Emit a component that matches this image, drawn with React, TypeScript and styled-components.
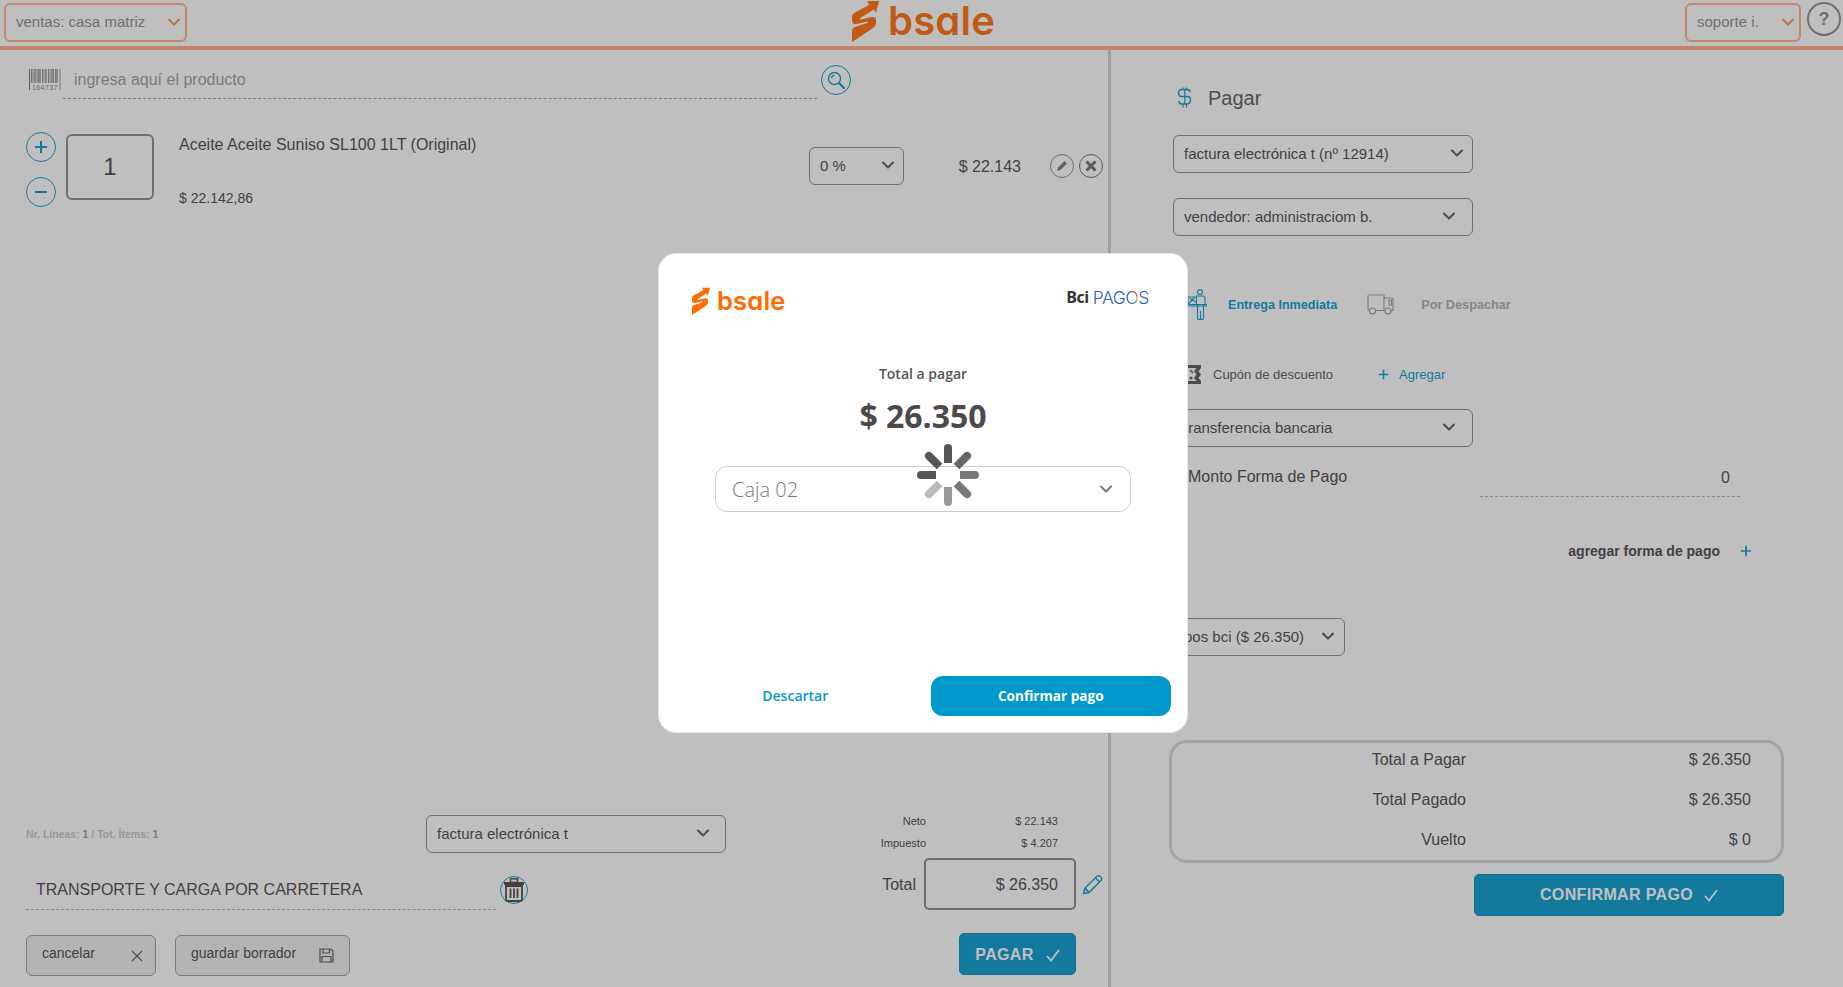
import React from "react";
import styled, { createGlobalStyle } from "styled-components";

const Global = createGlobalStyle`
  html, body { margin: 0; padding: 0; height: 100%; background: #fff; overflow: hidden; }
  body { font-family: "Liberation Sans", Arial, sans-serif; color: #444; }
  #root { height: 987px; }
  * { box-sizing: border-box; }
`;

const BLUE = "#0099cc";
const ORANGE = "#ff6b00";

const Page = styled.div`
  position: relative;
  width: 1843px;
  height: 987px;
  overflow: hidden;
  background: #fff;
`;
const Header = styled.header`
  height: 50px;
  border-bottom: 4px solid #ffae85;
  display: grid;
  grid-template-columns: 1fr auto 1fr;
  align-items: start;
  padding: 3px 2px 0 4px;
`;
const HeaderRight = styled.div`
  display: flex;
  justify-content: flex-end;
  gap: 6px;
`;
const HeaderSelect = styled.div<{ $w: number }>`
  width: ${(p) => p.$w}px;
  height: 39px;
  border: 2px solid #ffae85;
  border-radius: 6px;
  display: flex;
  align-items: center;
  justify-content: space-between;
  padding: 0 4px 2px 10px;
  font-size: 15px;
  color: #888;
`;
const HelpCircle = styled.div`
  width: 34px;
  height: 34px;
  margin-top: -1px;
  border: 2px solid #888;
  border-radius: 50%;
  display: flex;
  align-items: center;
  justify-content: center;
  font-size: 18px;
  font-weight: 700;
  color: #888;
`;
const LogoWrap = styled.div<{ $gap: number }>`
  display: flex;
  align-items: flex-start;
  gap: ${(p) => p.$gap}px;
`;
const LogoWord = styled.span<{ $size: number }>`
  font-family: Inter, "Liberation Sans", sans-serif;
  font-weight: 600;
  font-size: ${(p) => p.$size}px;
  font-feature-settings: "cv11" 1;
  line-height: 1;
  color: ${ORANGE};
  letter-spacing: 0.2px;
`;
const HeaderLogoRow = styled(LogoWrap)`
  margin: -3px 0 0 2px;
  ${LogoWord} { margin-top: 1px; }
`;
const ModalLogoRow = styled(LogoWrap)`
  ${LogoWord} { margin-top: 1px; }
`;
const Main = styled.main`
  display: flex;
  height: 937px;
`;
const LeftCol = styled.section`
  width: 1111px;
  border-right: 3px solid #d0d0d0;
  display: flex;
  flex-direction: column;
`;
const SearchRow = styled.div`
  display: flex;
  align-items: flex-start;
  padding: 20px 0 0 28px;
`;
const BarcodeSlot = styled.div`
  margin: -1px 0 0 1px;
  height: 21px;
`;
const SearchInput = styled.div`
  width: 754px;
  height: 29px;
  margin-left: 2px;
  border-bottom: 1px dashed #999;
  padding-left: 11px;
  font-size: 16px;
  line-height: 20px;
  color: #999;
`;
const CircleBtn = styled.div<{ $size?: number; $color?: string }>`
  width: ${(p) => p.$size ?? 30}px;
  height: ${(p) => p.$size ?? 30}px;
  flex: none;
  border: 1px solid ${(p) => p.$color ?? BLUE};
  border-radius: 50%;
  display: flex;
  align-items: center;
  justify-content: center;
`;
const SearchBtn = styled(CircleBtn)`
  margin: -5px 0 0 4px;
`;
const ItemRow = styled.div`
  display: flex;
  align-items: flex-start;
  margin-top: 33px;
  padding-left: 26px;
`;
const Stepper = styled.div`
  display: flex;
  flex-direction: column;
  gap: 15px;
`;
const QtyBox = styled.div`
  width: 88px;
  height: 66px;
  margin: 2px 0 0 10px;
  border: 2px solid #888;
  border-radius: 6px;
  display: flex;
  align-items: center;
  justify-content: center;
  font-size: 24px;
  color: #444;
`;
const ItemInfo = styled.div`
  flex: 1;
  margin-left: 25px;
  padding-top: 4px;
`;
const ItemName = styled.div`
  font-size: 16px;
  line-height: 18px;
`;
const ItemPrice = styled.div`
  margin-top: 35px;
  font-size: 14px;
  line-height: 18px;
`;
const Select = styled.div<{ $w: number; $pr?: number }>`
  width: ${(p) => p.$w}px;
  height: 38px;
  flex: none;
  border: 1px solid #888;
  border-radius: 6px;
  display: flex;
  align-items: center;
  justify-content: space-between;
  padding: 0 ${(p) => p.$pr ?? 8}px 2px 10px;
  font-size: 15px;
  color: #444;
`;
const DiscountSelect = styled(Select)`
  margin-top: 15px;
`;
const ItemAmount = styled.div`
  width: 117px;
  margin-top: 16px;
  text-align: right;
  font-size: 16px;
  line-height: 38px;
`;
const ItemActions = styled.div`
  display: flex;
  gap: 5px;
  margin: 22px 5px 0 29px;
`;
const Footer = styled.div`
  margin-top: auto;
  display: flex;
  padding: 0 0 11px 26px;
`;
const FooterLeft = styled.div`
  width: 704px;
  padding-top: 1px;
`;
const FooterTop = styled.div`
  display: flex;
  align-items: center;
`;
const Counts = styled.div`
  width: 400px;
  font-size: 10.5px;
  font-weight: 700;
  color: #c4c4c4;
  b { color: #999; }
`;
const NoteRow = styled.div`
  display: flex;
  align-items: center;
  margin-top: 19px;
`;
const NoteInput = styled.div`
  width: 470px;
  height: 38px;
  padding: 8px 0 0 10px;
  border-bottom: 1px dashed #aaa;
  font-size: 16px;
  line-height: 20px;
`;
const TrashBtn = styled(CircleBtn)`
  margin: -2px 0 0 4px;
`;
const ButtonRow = styled.div`
  display: flex;
  gap: 19px;
  margin-top: 25px;
`;
const GrayBtn = styled.div<{ $w: number }>`
  width: ${(p) => p.$w}px;
  height: 41px;
  border: 1px solid #999;
  border-radius: 6px;
  background: #eee;
  display: flex;
  align-items: center;
  justify-content: space-between;
  padding: 0 15px 5px 15px;
  font-size: 14px;
  color: #444;
  svg { margin-top: 5px; }
`;
const CancelBtn = styled(GrayBtn)`
  padding-right: 12px;
`;
const FooterRight = styled.div`
  flex: 1;
`;
const TaxLine = styled.div`
  display: grid;
  grid-template-columns: 196px 132px;
  height: 14px;
  margin-bottom: 8px;
  font-size: 11px;
  line-height: 14px;
  text-align: right;
`;
const TotalRow = styled.div`
  display: flex;
  align-items: center;
  margin-top: 5px;
`;
const TotalLabel = styled.div`
  width: 186px;
  text-align: right;
  font-size: 16px;
  padding-top: 2px;
`;
const TotalBox = styled.div`
  width: 152px;
  height: 52px;
  margin: 0 6px 0 8px;
  padding: 16px 16px 0 0;
  border: 2px solid #888;
  border-radius: 5px;
  text-align: right;
  font-size: 16px;
`;
const PrimaryBtn = styled.div<{ $w: number; $gap: number }>`
  width: ${(p) => p.$w}px;
  height: 42px;
  border: 1px solid #0a83b5;
  border-radius: 5px;
  background: ${BLUE};
  color: #fff;
  font-weight: 700;
  font-size: 16px;
  letter-spacing: 0.35px;
  display: flex;
  align-items: center;
  justify-content: center;
  gap: ${(p) => p.$gap}px;
`;
const PayBtn = styled(PrimaryBtn)`
  margin: 23px 0 0 229px;
  padding-top: 2px;
`;
const RightCol = styled.section`
  flex: 1;
  padding: 37px 0 0 62px;
`;
const TitleRow = styled.div`
  display: flex;
  align-items: center;
  height: 21px;
  padding-left: 4px;
  gap: 16px;
  font-size: 20px;
  color: #555;
`;
const TitleText = styled.span`
  margin-top: 2px;
`;
const RightSelect = styled(Select)<{ $mt: number }>`
  margin-top: ${(p) => p.$mt}px;
`;
const DeliveryRow = styled.div`
  display: flex;
  align-items: center;
  height: 31px;
  margin-top: 53px;
  padding-left: 14px;
  font-size: 13px;
`;
const DeliveryActive = styled.span`
  margin: 1px 30px 0 21px;
  font-weight: 700;
  font-size: 12.6px;
  color: ${BLUE};
`;
const DeliveryIdle = styled.span`
  margin: 1px 0 0 27px;
  font-weight: 700;
  font-size: 12.7px;
  color: #aaa;
`;
const CouponRow = styled.div`
  display: flex;
  align-items: center;
  height: 19px;
  margin-top: 45px;
  padding-left: 8px;
  font-size: 13px;
  color: #555;
`;
const CouponText = styled.span`
  margin: 0 45px 0 12px;
`;
const AddText = styled.span`
  margin-left: 10px;
  color: ${BLUE};
`;
const AmountRow = styled.div`
  display: flex;
  height: 38px;
  margin-top: 12px;
  padding-left: 15px;
  font-size: 16px;
  line-height: 36px;
`;
const AmountLabel = styled.div`
  width: 292px;
`;
const AmountInput = styled.div`
  width: 260px;
  padding: 1px 10px 0 0;
  border-bottom: 1px dashed #aaa;
  text-align: right;
`;
const AddPayRow = styled.div`
  width: 579px;
  height: 20px;
  margin-top: 44px;
  display: flex;
  align-items: center;
  justify-content: flex-end;
  gap: 20px;
  font-size: 14px;
  font-weight: 700;
  color: #444;
`;
const SummaryBox = styled.div`
  width: 615px;
  height: 123px;
  margin: 84px 0 0 -4px;
  padding-top: 7px;
  border: 3px solid #d5d5d5;
  border-radius: 18px;
`;
const SummaryLine = styled.div`
  display: grid;
  grid-template-columns: 294px 285px;
  height: 20px;
  margin-bottom: 20px;
  font-size: 16px;
  line-height: 20px;
  text-align: right;
`;
const ConfirmBtn = styled(PrimaryBtn)`
  margin: 11px 0 0 301px;
`;
const Overlay = styled.div`
  position: absolute;
  inset: 0;
  background: rgba(60, 60, 60, 0.33);
`;
const Modal = styled.div`
  position: absolute;
  left: 658px;
  top: 253px;
  width: 530px;
  height: 480px;
  background: #fff;
  border: 1px solid #e6e6e6;
  border-radius: 18px;
  font-family: "Open Sans", sans-serif;
  display: flex;
  flex-direction: column;
  align-items: center;
  padding: 0 16px 16px 33px;
`;
const ModalTop = styled.div`
  width: 100%;
  display: flex;
  justify-content: space-between;
  align-items: flex-start;
  padding: 33px 22px 0 0;
`;
const BciMark = styled.div`
  display: flex;
  align-items: center;
  gap: 4px;
  margin-top: 1px;
  height: 18px;
`;
const BciText = styled.span`
  font-family: "Open Sans", sans-serif;
  font-weight: 700;
  font-size: 16px;
  letter-spacing: -0.5px;
  margin-left: -1px;
  color: #333;
`;
const PagosText = styled.span`
  font-family: Inter, sans-serif;
  font-weight: 300;
  font-size: 17.5px;
  letter-spacing: -0.4px;
  color: #2b5fc9;
`;
const PagosO = styled.span`
  background: conic-gradient(from 0deg, #e2483b 0 25%, #f2b52c 25% 33%, #3fa34d 33% 42%, #2b5fc9 42%);
  -webkit-background-clip: text;
  background-clip: text;
  color: transparent;
`;
const ModalBody = styled.div`
  width: 100%;
  margin-left: -17px;
  display: flex;
  flex-direction: column;
  align-items: center;
  flex: 1;
`;
const PayLabel = styled.div`
  margin-top: 49px;
  font-size: 14px;
  font-weight: 600;
  line-height: 20px;
  color: #555;
`;
const PayAmount = styled.div`
  margin-top: 10px;
  font-size: 32px;
  font-weight: 700;
  line-height: 44px;
  color: #4a4a4a;
`;
const CajaSelect = styled.div`
  width: 416px;
  height: 46px;
  margin-top: 28px;
  padding: 0 17px 0 16px;
  border: 1px solid #ccc;
  border-radius: 12px;
  display: flex;
  align-items: center;
  justify-content: space-between;
  font-size: 20px;
  font-weight: 300;
  color: #777;
`;
const ModalActions = styled.div`
  width: 100%;
  display: flex;
  align-items: center;
  margin-top: auto;
`;
const DiscardLink = styled.div`
  width: 240px;
  padding: 0 33px 2px 0;
  text-align: center;
  font-size: 14px;
  font-weight: 600;
  color: ${BLUE};
`;
const ModalConfirm = styled.div`
  width: 241px;
  height: 40px;
  margin-left: -1px;
  padding-bottom: 2px;
  border-radius: 12px;
  background: ${BLUE};
  color: #fff;
  font-size: 13.6px;
  font-weight: 700;
  display: flex;
  align-items: center;
  justify-content: center;
`;
const SpinnerWrap = styled.div`
  position: absolute;
  left: 916px;
  top: 443px;
  width: 64px;
  height: 64px;
`;

const Chevron = ({ color = "#555", size = 14 }: { color?: string; size?: number }) => (
  <svg width={size} height={size} viewBox="0 0 14 14" fill="none">
    <path d="M2 4.5 7 9.5 12 4.5" stroke={color} strokeWidth="2" strokeLinecap="round" strokeLinejoin="round" />
  </svg>
);

const LogoMark = ({ h }: { h: number }) => (
  <svg width={(h * 27) / 42} height={h} viewBox="0 0 27 42">
    <path
      fill={ORANGE}
      d="M15.5 1 27 1 24 13 22 9.5 9 17.5Q7 19 9 19.5L20 17Q24 16.5 24 20V23Q24 26 21 28L0 42V31Q0 28 3 27L15 23Q17 22 15 21.5L5 24Q0 25 0 20V17Q0 14 3 12.5L17 5Z"
    />
  </svg>
);

const Barcode = () => (
  <svg width="32" height="21" viewBox="0 0 32 21">
    <g stroke="#777" fill="none">
      {[0.5, 2.5, 4, 6, 8, 9.5, 11, 13.5, 15, 17, 19.5, 21, 23, 24.5, 26.5, 28, 31].map((x, i) => (
        <line key={i} x1={x} x2={x} y1="0" y2={i === 0 || i === 16 ? 21 : 14} strokeWidth={i % 3 === 0 ? 1.2 : 0.8} />
      ))}
    </g>
    <text x="3" y="20.5" fontSize="7" fontFamily="Liberation Sans, sans-serif" fill="#777" letterSpacing="0.4">
      164737
    </text>
  </svg>
);

const Magnifier = () => (
  <svg width="20" height="20" viewBox="0 0 20 20" fill="none" stroke={BLUE} strokeWidth="1.4">
    <circle cx="8.5" cy="8.5" r="6" />
    <path d="M13 13 18 18" strokeWidth="2.2" strokeLinecap="round" />
    <path d="M5.5 8a3 3 0 0 1 3-2.6" />
  </svg>
);

const PlusGlyph = ({ size = 14, color = BLUE }: { size?: number; color?: string }) => (
  <svg width={size} height={size} viewBox="0 0 14 14">
    <path d="M7 1V13M1 7H13" stroke={color} strokeWidth="2" />
  </svg>
);

const MinusGlyph = () => (
  <svg width="14" height="14" viewBox="0 0 14 14">
    <path d="M1 7H13" stroke={BLUE} strokeWidth="2" />
  </svg>
);

const EditGlyph = () => (
  <svg width="14" height="14" viewBox="0 0 14 14">
    <path d="M2 12 3 8.5 9.5 2 12 4.5 5.5 11Z" fill="#777" />
  </svg>
);

const CloseGlyph = () => (
  <svg width="14" height="14" viewBox="0 0 14 14">
    <path d="M2.5 2.5 11.5 11.5M11.5 2.5 2.5 11.5" stroke="#666" strokeWidth="3" />
  </svg>
);

const TrashGlyph = () => (
  <svg width="22" height="24" viewBox="0 0 22 24">
    <rect x="7.5" y="0.8" width="7" height="3.5" fill="none" stroke="#444" strokeWidth="1.4" />
    <rect x="1" y="4" width="20" height="3" fill="#444" />
    <path d="M3 8H19V21.5Q19 23 17.5 23H4.5Q3 23 3 21.5Z" fill="none" stroke="#444" strokeWidth="1.8" />
    <path d="M7.5 10.5V20M11 10.5V20M14.5 10.5V20" stroke="#444" strokeWidth="1.8" />
  </svg>
);

const XThin = () => (
  <svg width="12" height="12" viewBox="0 0 12 12">
    <path d="M1 1 11 11M11 1 1 11" stroke="#555" strokeWidth="1.1" />
  </svg>
);

const SaveGlyph = () => (
  <svg width="15" height="15" viewBox="0 0 15 15" fill="none" stroke="#555" strokeWidth="1.2">
    <path d="M1 1H12L14 3V14H1Z" />
    <path d="M4 1V5H10.5V1M3 14V8.5H12V14" />
  </svg>
);

const PencilBlue = () => (
  <svg width="21" height="21" viewBox="0 0 21 21" fill="none" stroke={BLUE} strokeWidth="1.4">
    <path d="M1.5 19.5 3 14 15 2.2Q16.5 1 18.5 2.5T19 6.5L7 18.5Z" />
    <path d="M3 14 7 18.5M13.5 4 17.5 8" />
  </svg>
);

const Check = ({ color = "#fff" }: { color?: string }) => (
  <svg width="14" height="13" viewBox="0 0 14 13" fill="none">
    <path d="M1 7 5 11.5 13 1" stroke={color} strokeWidth="1.8" />
  </svg>
);

const DollarIcon = () => (
  <svg width="15" height="21" viewBox="0 0 15 21" fill="none" stroke={BLUE} strokeWidth="1.5">
    <path d="M13 5Q13 2.5 10 2.5H5Q1.5 2.5 1.5 6T5 9.5H10Q13.5 9.5 13.5 13T10 17H5Q2 17 2 14" />
    <path d="M6 .5V2.5M9.5 .5V2.5M6 17V20.5M9.5 17V20.5M7.8 2.5V17" strokeWidth="1.2" />
  </svg>
);

const PersonBox = () => (
  <svg width="20" height="31" viewBox="0 0 20 31" fill="none" stroke={BLUE} strokeWidth="1.1">
    <circle cx="13" cy="3" r="2.4" />
    <path d="M9.5 7H16Q18 7 18 9V16H16.5V29.5Q16.5 30.5 15 30.5T13.5 29.5V22 29.5Q13.5 30.5 12 30.5T10.5 29.5V16H9.5Z" />
    <path d="M0 15.5H20V17H0ZM1 8H8L1 15.5V8ZM3 9.5 9 13" />
  </svg>
);

const Truck = () => (
  <svg width="27" height="21" viewBox="0 0 27 21" fill="none" stroke="#999" strokeWidth="1.1">
    <path d="M3 16.5H1V2Q1 1 2 1H17V16.5H8" />
    <path d="M17 4H25Q26 4 26 5V16.5H23M17 16.5H13" />
    <circle cx="5.5" cy="17" r="3" />
    <circle cx="21" cy="17" r="3" />
    <rect x="22" y="6" width="2.5" height="5" />
  </svg>
);

const Coupon = () => (
  <svg width="20" height="19" viewBox="0 0 20 19">
    <path
      fill="#555"
      fillRule="evenodd"
      d="M0 0H20V3L17.5 6 20 9.5 17.5 13 20 16V19H0V16L2.5 13 0 9.5 2.5 6 0 3ZM4.5 3 7 6 4.5 9.5 7 13 4.5 16H15.5L13 13 15.5 9.5 13 6 15.5 3Z"
    />
    <circle cx="10" cy="13" r="1.6" fill="#555" />
    <path d="M9 5 12 8" stroke="#555" strokeWidth="1.6" />
  </svg>
);

const SPIN = ["#555", "#666", "#777", "#777", "#9a9a9a", "#bbb", "#555", "#555"];
const Spinner = () => (
  <svg width="64" height="64" viewBox="-32 -32 64 64">
    {SPIN.map((c, i) => (
      <g key={i} transform={`rotate(${i * 45})`}>
        <path d="M-4 -12V-27A4 4 0 0 1 4 -27V-12Z" fill={c} />
      </g>
    ))}
  </svg>
);

export default function App() {
  return (
    <Page>
      <Global />
      <Header>
        <HeaderSelect $w={183}>
          ventas: casa matriz
          <Chevron color="#ff8a4d" />
        </HeaderSelect>
        <HeaderLogoRow $gap={9}>
          <LogoMark h={42} />
          <LogoWord $size={40}>bsale</LogoWord>
        </HeaderLogoRow>
        <HeaderRight>
          <HeaderSelect $w={116}>
            soporte i.
            <Chevron color="#ff8a4d" />
          </HeaderSelect>
          <HelpCircle>?</HelpCircle>
        </HeaderRight>
      </Header>
      <Main>
        <LeftCol>
          <SearchRow>
            <BarcodeSlot>
              <Barcode />
            </BarcodeSlot>
            <SearchInput>ingresa aquí el producto</SearchInput>
            <SearchBtn>
              <Magnifier />
            </SearchBtn>
          </SearchRow>
          <ItemRow>
            <Stepper>
              <CircleBtn>
                <PlusGlyph />
              </CircleBtn>
              <CircleBtn>
                <MinusGlyph />
              </CircleBtn>
            </Stepper>
            <QtyBox>1</QtyBox>
            <ItemInfo>
              <ItemName>Aceite Aceite Suniso SL100 1LT (Original)</ItemName>
              <ItemPrice>$ 22.142,86</ItemPrice>
            </ItemInfo>
            <DiscountSelect $w={95}>
              0 %
              <Chevron />
            </DiscountSelect>
            <ItemAmount>$ 22.143</ItemAmount>
            <ItemActions>
              <CircleBtn $size={24} $color="#888">
                <EditGlyph />
              </CircleBtn>
              <CircleBtn $size={24} $color="#666">
                <CloseGlyph />
              </CircleBtn>
            </ItemActions>
          </ItemRow>
          <Footer>
            <FooterLeft>
              <FooterTop>
                <Counts>
                  Nr. Líneas: <b>1</b> / Tot. Ítems: <b>1</b>
                </Counts>
                <Select $w={300} $pr={15}>
                  factura electrónica t
                  <Chevron />
                </Select>
              </FooterTop>
              <NoteRow>
                <NoteInput>TRANSPORTE Y CARGA POR CARRETERA</NoteInput>
                <TrashBtn $size={28}>
                  <TrashGlyph />
                </TrashBtn>
              </NoteRow>
              <ButtonRow>
                <CancelBtn $w={130}>
                  cancelar
                  <XThin />
                </CancelBtn>
                <GrayBtn $w={175}>
                  guardar borrador
                  <SaveGlyph />
                </GrayBtn>
              </ButtonRow>
            </FooterLeft>
            <FooterRight>
              <TaxLine>
                <span>Neto</span>
                <span>$ 22.143</span>
              </TaxLine>
              <TaxLine>
                <span>Impuesto</span>
                <span>$ 4.207</span>
              </TaxLine>
              <TotalRow>
                <TotalLabel>Total</TotalLabel>
                <TotalBox>$ 26.350</TotalBox>
                <PencilBlue />
              </TotalRow>
              <PayBtn $w={117} $gap={12}>
                PAGAR
                <Check />
              </PayBtn>
            </FooterRight>
          </Footer>
        </LeftCol>
        <RightCol>
          <TitleRow>
            <DollarIcon />
            <TitleText>Pagar</TitleText>
          </TitleRow>
          <RightSelect $w={300} $mt={27}>
            factura electrónica t (nº 12914)
            <Chevron />
          </RightSelect>
          <RightSelect $w={300} $mt={25} $pr={16}>
            vendedor: administraciom b.
            <Chevron />
          </RightSelect>
          <DeliveryRow>
            <PersonBox />
            <DeliveryActive>Entrega Inmediata</DeliveryActive>
            <Truck />
            <DeliveryIdle>Por Despachar</DeliveryIdle>
          </DeliveryRow>
          <CouponRow>
            <Coupon />
            <CouponText>Cupón de descuento</CouponText>
            <PlusGlyph size={11} />
            <AddText>Agregar</AddText>
          </CouponRow>
          <RightSelect $w={300} $mt={25} $pr={16}>
            transferencia bancaria
            <Chevron />
          </RightSelect>
          <AmountRow>
            <AmountLabel>Monto Forma de Pago</AmountLabel>
            <AmountInput>0</AmountInput>
          </AmountRow>
          <AddPayRow>
            agregar forma de pago
            <PlusGlyph size={12} />
          </AddPayRow>
          <RightSelect $w={172} $mt={57} $pr={9}>
            pos bci ($ 26.350)
            <Chevron />
          </RightSelect>
          <SummaryBox>
            <SummaryLine>
              <span>Total a Pagar</span>
              <span>$ 26.350</span>
            </SummaryLine>
            <SummaryLine>
              <span>Total Pagado</span>
              <span>$ 26.350</span>
            </SummaryLine>
            <SummaryLine>
              <span>Vuelto</span>
              <span>$ 0</span>
            </SummaryLine>
          </SummaryBox>
          <ConfirmBtn $w={310} $gap={11}>
            CONFIRMAR PAGO
            <Check />
          </ConfirmBtn>
        </RightCol>
      </Main>
      <Overlay />
      <Modal>
        <ModalTop>
          <ModalLogoRow $gap={7}>
            <LogoMark h={28} />
            <LogoWord $size={25.5}>bsale</LogoWord>
          </ModalLogoRow>
          <BciMark>
            <BciText>Bci</BciText>
            <PagosText>
              PAG<PagosO>O</PagosO>S
            </PagosText>
          </BciMark>
        </ModalTop>
        <ModalBody>
          <PayLabel>Total a pagar</PayLabel>
          <PayAmount>$ 26.350</PayAmount>
          <CajaSelect>
            Caja 02
            <Chevron color="#777" />
          </CajaSelect>
        </ModalBody>
        <ModalActions>
          <DiscardLink>Descartar</DiscardLink>
          <ModalConfirm>Confirmar pago</ModalConfirm>
        </ModalActions>
      </Modal>
      <SpinnerWrap>
        <Spinner />
      </SpinnerWrap>
    </Page>
  );
}
